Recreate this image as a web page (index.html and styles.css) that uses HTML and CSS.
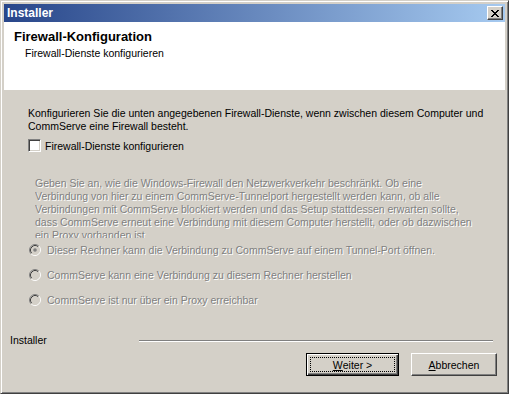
FILE: index.html
```html
<!DOCTYPE html>
<html lang="de">
<head>
    <meta charset="UTF-8">
    <meta name="viewport" content="width=device-width, initial-scale=1.0">
    <title>Installer</title>
    <link rel="stylesheet" href="styles.css">
</head>
<body>
    <div class="window">
        <div class="titlebar">
            <span class="title">Installer</span>
            <button class="close-btn" aria-label="Schließen">
                <svg width="8" height="7" viewBox="0 0 8 7" shape-rendering="crispEdges">
                    <path fill="#000" d="M0 0h2v1H0zM6 0h2v1H6zM1 1h2v1H1zM5 1h2v1H5zM2 2h4v1H2zM3 3h2v1H3zM2 4h4v1H2zM1 5h2v1H1zM5 5h2v1H5zM0 6h2v1H0zM6 6h2v1H6z"/>
                </svg>
            </button>
        </div>

        <div class="header">
            <h1>Firewall-Konfiguration</h1>
            <p class="subtitle">Firewall-Dienste konfigurieren</p>
        </div>

        <div class="page">
            <p class="intro">Konfigurieren Sie die unten angegebenen Firewall-Dienste, wenn zwischen diesem Computer und<br>CommServe eine Firewall besteht.</p>

            <label class="check">
                <span class="checkbox"></span>
                Firewall-Dienste konfigurieren
            </label>

            <p class="hint">Geben Sie an, wie die Windows-Firewall den Netzwerkverkehr beschränkt. Ob eine<br>Verbindung von hier zu einem CommServe-Tunnelport hergestellt werden kann, ob alle<br>Verbindungen mit CommServe blockiert werden und das Setup stattdessen erwarten sollte,<br>dass CommServe erneut eine Verbindung mit diesem Computer herstellt, oder ob dazwischen<br>ein Proxy vorhanden ist</p>

            <div class="options">
                <div class="radio-row">
                    <svg class="radio" width="12" height="12" viewBox="0 0 12 12">
                        <circle cx="6" cy="6" r="4.5" fill="#d4d0c8"/>
                        <path d="M2.11 9.89A5.5 5.5 0 0 1 9.89 2.11" stroke="#808080" fill="none"/>
                        <path d="M9.89 2.11A5.5 5.5 0 0 1 2.11 9.89" stroke="#fff" fill="none"/>
                        <path d="M2.82 9.18A4.5 4.5 0 0 1 9.18 2.82" stroke="#404040" fill="none"/>
                        <path d="M9.18 2.82A4.5 4.5 0 0 1 2.82 9.18" stroke="#d4d0c8" fill="none"/>
                        <circle cx="6" cy="6" r="1.8" fill="#808080"/>
                    </svg>
                    Dieser Rechner kann die Verbindung zu CommServe auf einem Tunnel-Port öffnen.
                </div>
                <div class="radio-row">
                    <svg class="radio" width="12" height="12" viewBox="0 0 12 12">
                        <circle cx="6" cy="6" r="4.5" fill="#d4d0c8"/>
                        <path d="M2.11 9.89A5.5 5.5 0 0 1 9.89 2.11" stroke="#808080" fill="none"/>
                        <path d="M9.89 2.11A5.5 5.5 0 0 1 2.11 9.89" stroke="#fff" fill="none"/>
                        <path d="M2.82 9.18A4.5 4.5 0 0 1 9.18 2.82" stroke="#404040" fill="none"/>
                        <path d="M9.18 2.82A4.5 4.5 0 0 1 2.82 9.18" stroke="#d4d0c8" fill="none"/>
                    </svg>
                    CommServe kann eine Verbindung zu diesem Rechner herstellen
                </div>
                <div class="radio-row">
                    <svg class="radio" width="12" height="12" viewBox="0 0 12 12">
                        <circle cx="6" cy="6" r="4.5" fill="#d4d0c8"/>
                        <path d="M2.11 9.89A5.5 5.5 0 0 1 9.89 2.11" stroke="#808080" fill="none"/>
                        <path d="M9.89 2.11A5.5 5.5 0 0 1 2.11 9.89" stroke="#fff" fill="none"/>
                        <path d="M2.82 9.18A4.5 4.5 0 0 1 9.18 2.82" stroke="#404040" fill="none"/>
                        <path d="M9.18 2.82A4.5 4.5 0 0 1 2.82 9.18" stroke="#d4d0c8" fill="none"/>
                    </svg>
                    CommServe ist nur über ein Proxy erreichbar
                </div>
            </div>
        </div>

        <div class="footer">
            <span class="brand">Installer</span>
            <span class="etched"></span>
        </div>

        <div class="buttons">
            <button class="btn btn-default"><span class="focus"><u>W</u>eiter &gt;</span></button>
            <button class="btn btn-cancel"><u>A</u>bbrechen</button>
        </div>
    </div>
</body>
</html>
```

FILE: styles.css
```css
* {
    box-sizing: border-box;
}
body {
    margin: 0;
    font-family: 'Liberation Sans', Arial, sans-serif;
    font-size: 10.5px;
    color: #000;
    background-color: #d4d0c8;
}
.window {
    width: 509px;
    height: 394px;
    padding: 3px;
    display: flex;
    flex-direction: column;
    background-color: #d4d0c8;
    border: 1px solid;
    border-color: #d4d0c8 #404040 #404040 #d4d0c8;
    box-shadow: inset 1px 1px #fff, inset -1px -1px #808080;
}
.titlebar {
    height: 18px;
    display: flex;
    align-items: center;
    justify-content: space-between;
    padding: 0 2px 0 3px;
    background: linear-gradient(to right, #28468a, #a6caf0);
}
.title {
    color: #fff;
    font-weight: bold;
    font-size: 12px;
}
.close-btn {
    width: 16px;
    height: 14px;
    padding: 0;
    display: flex;
    align-items: center;
    justify-content: center;
    background-color: #d4d0c8;
    border: 1px solid;
    border-color: #fff #404040 #404040 #fff;
    box-shadow: inset -1px -1px #808080;
}
.header {
    height: 68px;
    padding: 7px 0 0 10px;
    background-color: #fff;
}
h1 {
    margin: 0;
    font-size: 13px;
    line-height: 16px;
    font-weight: bold;
}
.subtitle {
    margin: 2px 0 0 11px;
    line-height: 13px;
}
.page {
    flex: 1;
    padding: 17px 0 0 24px;
}
.intro {
    margin: 0;
    line-height: 13px;
    white-space: nowrap;
}
.check {
    display: flex;
    align-items: center;
    gap: 4px;
    height: 13px;
    margin-top: 6px;
}
.checkbox {
    width: 13px;
    height: 13px;
    background-color: #fff;
    border: 1px solid;
    border-color: #808080 #fff #fff #808080;
    box-shadow: inset 1px 1px #404040, inset -1px -1px #d4d0c8;
}
.hint {
    margin: 25px 0 0 7px;
    height: 61px;
    overflow: hidden;
    line-height: 13px;
    white-space: nowrap;
    color: #808080;
    text-shadow: 1px 1px 0 #fff;
}
.options {
    display: flex;
    flex-direction: column;
    gap: 12px;
    margin: 5px 0 0 1px;
}
.radio-row {
    display: flex;
    align-items: center;
    gap: 6px;
    height: 13px;
    color: #808080;
    text-shadow: 1px 1px 0 #fff;
}
.radio {
    flex-shrink: 0;
}
.footer {
    height: 13px;
    display: grid;
    grid-template-columns: 129px 1fr;
    padding: 0 12px 0 6px;
    line-height: 13px;
}
.etched {
    height: 2px;
    margin-top: 6px;
    border-top: 1px solid #808080;
    border-bottom: 1px solid #fff;
}
.buttons {
    display: flex;
    justify-content: flex-end;
    gap: 12px;
    height: 23px;
    margin: 6px 0 14px;
    padding-right: 8px;
}
.btn {
    height: 23px;
    padding: 0;
    font: inherit;
    color: #000;
    background-color: #d4d0c8;
    border: 1px solid;
    border-color: #fff #404040 #404040 #fff;
    box-shadow: inset -1px -1px #808080;
}
.btn-default {
    width: 93px;
    display: flex;
    padding: 3px;
    border-color: #000;
    box-shadow: inset 1px 1px #fff, inset -1px -1px #404040, inset -2px -2px #808080;
}
.btn-default .focus {
    flex: 1;
    display: flex;
    align-items: center;
    justify-content: center;
    border: 1px dotted #000;
}
.btn-cancel {
    width: 86px;
}
```
